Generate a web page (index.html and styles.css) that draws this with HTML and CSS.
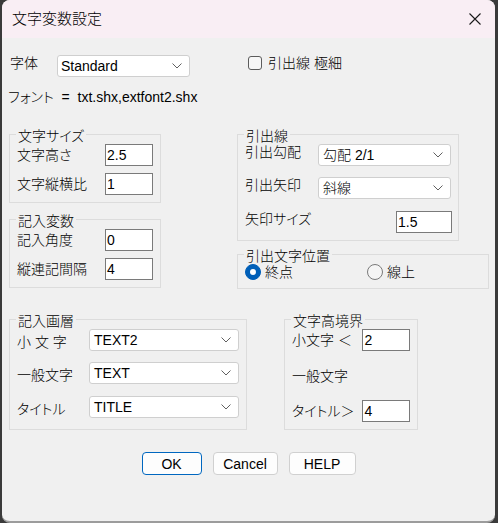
FILE: index.html
```html
<!DOCTYPE html>
<html lang="ja">
<head>
<meta charset="utf-8">
<title>文字変数設定</title>
<link rel="stylesheet" href="styles.css">
</head>
<body>
<div class="window">
  <div class="titlebar">
    <span class="title">文字変数設定</span>
    <svg class="close" width="12" height="12" viewBox="0 0 12 12"><path d="M0.5 0.5 L11.5 11.5 M11.5 0.5 L0.5 11.5" stroke="#1a1a1a" stroke-width="1.1" fill="none"/></svg>
  </div>
  <div class="content">
    <div class="row1">
      <span class="lbl-face">字体</span>
      <div class="select sel-std"><span>Standard</span><svg class="chev" width="10" height="6" viewBox="0 0 10 6"><path d="M0.5 0.5 L5 5 L9.5 0.5" stroke="#606060" stroke-width="1" fill="none"/></svg></div>
      <div class="check"><span class="box"></span><span>引出線 極細</span></div>
    </div>
    <div class="fontline">フォント  =  txt.shx,extfont2.shx</div>

    <div class="main">
      <div class="col-left">
        <div class="group g-left">
          <div class="legend">文字サイズ</div>
          <div class="frow"><span>文字高さ</span><div class="input">2.5</div></div>
          <div class="frow"><span>文字縦横比</span><div class="input">1</div></div>
        </div>
        <div class="group g-left g-var">
          <div class="legend">記入変数</div>
          <div class="frow"><span>記入角度</span><div class="input">0</div></div>
          <div class="frow"><span>縦連記間隔</span><div class="input">4</div></div>
        </div>
      </div>
      <div class="col-right">
        <div class="group g-lead">
          <div class="legend">引出線</div>
          <div class="rrow"><span>引出勾配</span><div class="select sel-lead"><span>勾配 2/1</span><svg class="chev" width="10" height="6" viewBox="0 0 10 6"><path d="M0.5 0.5 L5 5 L9.5 0.5" stroke="#606060" stroke-width="1" fill="none"/></svg></div></div>
          <div class="rrow r2"><span>引出矢印</span><div class="select sel-lead"><span>斜線</span><svg class="chev" width="10" height="6" viewBox="0 0 10 6"><path d="M0.5 0.5 L5 5 L9.5 0.5" stroke="#606060" stroke-width="1" fill="none"/></svg></div></div>
          <div class="rrow r3"><span>矢印サイズ</span><div class="input in-arrow">1.5</div></div>
        </div>
        <div class="group g-pos">
          <div class="legend">引出文字位置</div>
          <div class="radios">
            <div class="ritem first"><span class="radio on"></span><span>終点</span></div>
            <div class="ritem"><span class="radio"></span><span>線上</span></div>
          </div>
        </div>
      </div>
    </div>

    <div class="bottom">
      <div class="group g-layer">
        <div class="legend">記入画層</div>
        <div class="lrow"><span class="llabel">小 文 字</span><div class="select sel-layer"><span>TEXT2</span><svg class="chev" width="10" height="6" viewBox="0 0 10 6"><path d="M0.5 0.5 L5 5 L9.5 0.5" stroke="#606060" stroke-width="1" fill="none"/></svg></div></div>
        <div class="lrow l2"><span class="llabel">一般文字</span><div class="select sel-layer"><span>TEXT</span><svg class="chev" width="10" height="6" viewBox="0 0 10 6"><path d="M0.5 0.5 L5 5 L9.5 0.5" stroke="#606060" stroke-width="1" fill="none"/></svg></div></div>
        <div class="lrow l3"><span class="llabel">タイトル</span><div class="select sel-layer"><span>TITLE</span><svg class="chev" width="10" height="6" viewBox="0 0 10 6"><path d="M0.5 0.5 L5 5 L9.5 0.5" stroke="#606060" stroke-width="1" fill="none"/></svg></div></div>
      </div>
      <div class="group g-bound">
        <div class="legend">文字高境界</div>
        <div class="brow"><span class="blabel">小文字 ＜</span><div class="input">2</div></div>
        <div class="brow b2"><span class="blabel">一般文字</span></div>
        <div class="brow b3"><span class="blabel">タイトル＞</span><div class="input">4</div></div>
      </div>
    </div>

    <div class="buttons">
      <div class="btn btn-ok">OK</div>
      <div class="btn btn-cancel">Cancel</div>
      <div class="btn btn-help">HELP</div>
    </div>
  </div>
</div>
</body>
</html>
```

FILE: styles.css
```css
* { box-sizing: border-box; }
html, body { margin: 0; padding: 0; }
body {
  background: #3a3a3a;
  width: 498px;
  height: 523px;
  overflow: hidden;
  font-family: "Liberation Sans", "Noto Sans CJK JP", sans-serif;
  font-size: 14px;
  font-weight: 300;
  line-height: 16px;
  color: #000;
  font-feature-settings: "palt";
}
.window {
  margin-left: 2px;
  width: 493px;
  height: 523px;
  background: #f0f0f0;
  border-radius: 8px;
  border-bottom: 2px solid #9c9c9c;
  overflow: hidden;
}
.titlebar {
  height: 38px;
  background: #f9eef4;
  display: flex;
  align-items: center;
  justify-content: space-between;
  padding: 0 14px 0 10px;
}
.title { font-size: 15px; line-height: 16px; }
.close { display: block; }

.content { padding: 17px 0 0 7px; }

.row1 { display: flex; height: 22px; align-items: flex-start; }
.lbl-face { width: 47px; margin-left: 1px; }
.select {
  background: #fff;
  border: 1px solid #cfcfcf;
  border-radius: 3px;
  height: 22px;
  display: flex;
  align-items: center;
  justify-content: space-between;
  padding: 0 7px 0 4px;
}
.chev { display: block; }
.sel-std { width: 133px; padding-left: 3px; }
.check { display: flex; align-items: center; margin-left: 58px; height: 16px; }
.box {
  width: 14px; height: 14px;
  border: 1px solid #5c5c5c;
  border-radius: 3px;
  background: #f7f7f7;
  margin-right: 6px;
}
.fontline { margin-top: 12px; margin-left: -1px; white-space: pre; }

.main { display: flex; align-items: flex-start; gap: 76px; margin-top: 29px; }
.col-left, .col-right { display: flex; flex-direction: column; align-items: flex-start; }

.group {
  border: 1px solid #dcdcdc;
  padding: 0 7px 7px 7px;
}
.legend {
  width: fit-content;
  margin: -7px 0 0 -1px;
  padding: 0 2px;
  background: #f0f0f0;
  line-height: 16px;
}
.input {
  width: 48px;
  height: 22px;
  border: 1px solid #7a7a7a;
  background: #fff;
  padding-left: 1px;
  line-height: 20px;
}

.g-left { width: 152px; }
.g-var { margin-top: 16px; }
.frow { display: flex; align-items: center; justify-content: space-between; height: 22px; }
.frow + .frow { margin-top: 7px; }

.g-lead { width: 222px; }
.rrow { display: flex; align-items: flex-start; justify-content: space-between; height: 22px; }
.r2 { margin-top: 11px; }
.r3 { margin-top: 12px; }
.sel-lead { width: 133px; }
.in-arrow { width: 56px; margin-right: -1px; }

.g-pos { width: 252px; margin-top: 13px; padding-bottom: 8px; }
.radios { display: flex; height: 16px; }
.ritem { display: flex; align-items: center; gap: 4px; }
.ritem.first { width: 122px; }
.radio {
  width: 16px; height: 16px;
  border-radius: 50%;
  border: 1px solid #7a7a7a;
  background: #f5f5f5;
  display: flex;
  align-items: center;
  justify-content: center;
}
.radio.on { background: #005fb8; border-color: #005fb8; }
.radio.on::after {
  content: "";
  width: 6px; height: 6px;
  border-radius: 50%;
  background: #fff;
}

.bottom { display: flex; align-items: flex-start; gap: 37px; margin-top: 30px; }
.g-layer { width: 238px; padding-bottom: 11px; }
.lrow { display: flex; align-items: flex-start; justify-content: space-between; height: 22px; }
.llabel { margin-top: 5px; }
.l2 { margin-top: 11px; }
.l3 { margin-top: 12px; }
.sel-layer { width: 150px; }

.g-bound { width: 134px; }
.brow { display: flex; align-items: center; height: 22px; }
.blabel { width: 71px; white-space: nowrap; }
.b2 { margin-top: 14px; }
.b3 { margin-top: 13px; }

.buttons { display: flex; justify-content: center; gap: 11px; margin-top: 22px; padding-right: 7px; }
.btn {
  height: 23px;
  border: 1px solid #d0d0d0;
  border-radius: 4px;
  background: #fdfdfd;
  display: flex;
  align-items: center;
  justify-content: center;
}
.btn-ok { width: 60px; border-color: #0067c0; }
.btn-cancel { width: 65px; }
.btn-help { width: 67px; }
```
